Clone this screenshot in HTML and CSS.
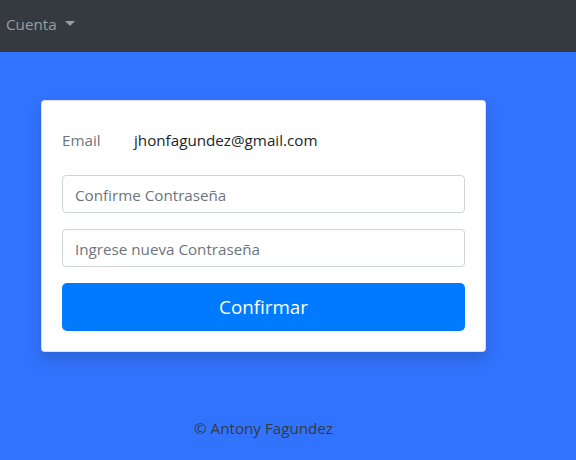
FILE: index.html
```html
<!DOCTYPE html>
<html lang="es">
<head>
<meta charset="utf-8">
<link rel="stylesheet" href="styles.css">
</head>
<body>
<nav class="navbar">
  <span class="nav-link">Cuenta <span class="caret"></span></span>
</nav>
<main class="main">
  <div class="column">
    <div class="card">
      <div class="email-row">
        <span class="email-label">Email</span>
        <span class="email-value">jhonfagundez@gmail.com</span>
      </div>
      <input class="field" type="password" placeholder="Confirme Contraseña">
      <input class="field" type="password" placeholder="Ingrese nueva Contraseña">
      <button class="btn">Confirmar</button>
    </div>
    <footer class="footer">© Antony Fagundez</footer>
  </div>
</main>
</body>
</html>
```
FILE: styles.css
```css
* { box-sizing: border-box; }
html, body { margin: 0; height: 100%; }
body {
  font-family: "Open Sans", "Noto Sans", sans-serif;
  font-size: 15.2px;
  color: #212529;
  background: #3273fd;
}
.navbar {
  height: 52px;
  background: #343a40;
  display: flex;
  align-items: center;
  padding: 0 6px 5px;
}
.nav-link {
  color: rgba(255,255,255,.5);
  display: flex;
  align-items: center;
  gap: 8px;
}
.caret {
  width: 0; height: 0;
  border-left: 5px solid transparent;
  border-right: 5px solid transparent;
  border-top: 5px solid rgba(255,255,255,.5);
}
.main { padding: 48px 0 0 41px; }
.column { width: 445px; }
.card {
  background: #fff;
  border: 1px solid rgba(0,0,0,.125);
  border-radius: 4px;
  box-shadow: 0 .5rem 1rem rgba(0,0,0,.15);
  padding: 20px;
  display: flex;
  flex-direction: column;
  gap: 16px;
}
.email-row {
  display: flex;
  height: 38px;
  align-items: center;
}
.email-label { color: #6c757d; width: 72px; }
.email-value { color: #212529; }
.field {
  height: 38px;
  border: 1px solid #ced4da;
  border-radius: 4px;
  padding: 6px 12px 5px;
  font: inherit;
  color: #495057;
}
.field::placeholder { color: #6c757d; }
.btn {
  height: 48px;
  border: none;
  border-radius: 5px;
  background: #007bff;
  color: #fff;
  font: inherit;
  font-size: 18.8px;
}
.footer {
  text-align: center;
  margin-top: 66px;
  color: #343a40;
}
```
